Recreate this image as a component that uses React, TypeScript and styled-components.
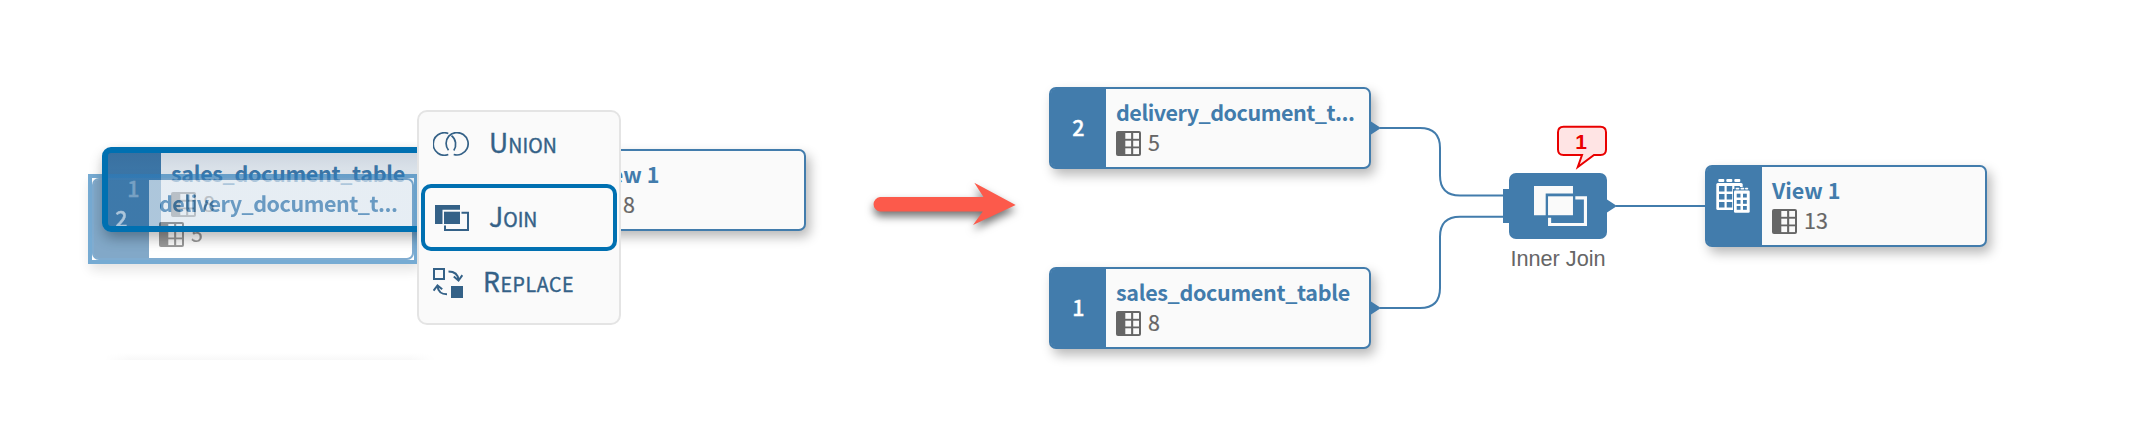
import React from 'react';
import styled, { createGlobalStyle } from 'styled-components';

const sans = '"Noto Sans CJK SC", "Noto Sans", sans-serif';
const blue = '#427cac';
const accent = '#0070b1';

const GlobalStyle = createGlobalStyle`
  * { box-sizing: border-box; }
  body { margin: 0; background: #fff; }
`;

const Canvas = styled.main`
  position: relative;
  width: 2134px;
  height: 448px;
  overflow: hidden;
  background: #fff;
  font-family: ${sans};
`;

const Layer = styled.svg`
  position: absolute;
  inset: 0;
  width: 2134px;
  height: 448px;
`;

const ArrowShape = styled.path`
  fill: #fc5a4b;
  filter: drop-shadow(0 5px 4px rgba(0, 0, 0, 0.55));
`;

const NodeCard = styled.article<{ $x: number; $y: number; $w: number }>`
  position: absolute;
  left: ${p => p.$x}px;
  top: ${p => p.$y}px;
  width: ${p => p.$w}px;
  height: 82px;
  display: flex;
  border: 2px solid ${blue};
  border-radius: 7px;
  background: #fafafa;
  box-shadow: 4px 6px 12px rgba(0, 0, 0, 0.28);
`;

const Strip = styled.div`
  display: flex;
  align-items: center;
  justify-content: center;
  flex: 0 0 55px;
  background: ${blue};
  border-radius: 4px 0 0 4px;
  color: #fff;
  font-size: 21.5px;
  line-height: 30px;
  font-weight: 500;
  -webkit-text-stroke: 0.3px currentColor;
  padding: 0 0 3px 0;
`;

const IconStrip = styled(Strip)`
  align-items: flex-start;
  padding: 12px 4px 0 0;
`;

const Body = styled.div`
  display: flex;
  flex-direction: column;
  padding: 8px 0 0 10px;
  white-space: nowrap;
`;

const Title = styled.div<{ $spacing?: number }>`
  height: 34px;
  color: ${blue};
  font-size: 21.5px;
  line-height: 30px;
  font-weight: 700;
  letter-spacing: ${p => p.$spacing ?? 0}px;
`;

const Columns = styled.div`
  display: flex;
  align-items: center;
  gap: 7px;
  height: 25px;
  color: #666;
  font-size: 21.5px;
  line-height: 24px;
`;

const Count = styled.span`
  height: 27px;
  line-height: 24px;
  -webkit-text-stroke: 0.2px currentColor;
`;

const Selected = styled.div`
  position: absolute;
  left: 102px;
  top: 147px;
  width: 340px;
  height: 85px;
  border: 6px solid ${accent};
  border-radius: 9px;
  background: linear-gradient(rgba(20, 40, 80, 0.13), rgba(20, 60, 110, 0.03) 40%), rgba(30, 110, 190, 0.07);
  box-shadow: 0 7px 14px rgba(0, 0, 0, 0.2);
`;

const Ghost = styled.div`
  position: absolute;
  left: 88px;
  top: 174px;
  width: 330px;
  height: 90px;
  padding: 4px;
  background: #3080bd;
  opacity: 0.66;
  box-shadow: 2px 6px 12px rgba(0, 0, 0, 0.18);
`;

const GhostBack = styled.div`
  width: 322px;
  height: 82px;
  background: #fff;
`;

const GhostCard = styled(NodeCard)`
  position: relative;
  left: auto;
  top: auto;
  border-color: #3f82b8;
  background: #fff;
  box-shadow: none;
  ${Title} { color: #2e74ac; }
`;

const Menu = styled.nav`
  position: absolute;
  left: 417px;
  top: 110px;
  width: 204px;
  height: 215px;
  display: flex;
  flex-direction: column;
  padding: 2px;
  border: 2px solid #e4e4e4;
  border-radius: 10px;
  background: #fafafa;
`;

const MenuItem = styled.div<{ $active?: boolean; $h: number; $bottom?: number }>`
  display: flex;
  align-items: center;
  flex: 0 0 ${p => p.$h}px;
  padding-bottom: ${p => p.$bottom ?? 0}px;
  border: 4px solid ${p => (p.$active ? accent : 'transparent')};
  border-radius: 10px;
  color: #346187;
`;

const MenuIcon = styled.span<{ $left: number; $gap: number }>`
  display: flex;
  margin-left: ${p => p.$left}px;
  margin-right: ${p => p.$gap}px;
`;

const MenuLabel = styled.span<{ $spacing: number }>`
  height: 38px;
  font-size: 26.5px;
  line-height: 34px;
  letter-spacing: ${p => p.$spacing}px;
  -webkit-text-stroke: 0.4px currentColor;
  small { font-size: 19.5px; }
`;

const JoinNode = styled.div`
  position: absolute;
  left: 1509px;
  top: 173px;
  width: 98px;
  height: 66px;
  display: flex;
  align-items: center;
  justify-content: center;
  padding-left: 4px;
  border-radius: 7px;
  background: ${blue};
  color: #fafafa;
`;

const JoinCaption = styled.div`
  position: absolute;
  left: 1498px;
  top: 246px;
  width: 120px;
  text-align: center;
  color: #666;
  font: 21.7px/25px "Liberation Sans", Arial, sans-serif;
`;

const BadgeText = styled.div`
  position: absolute;
  left: 1556px;
  top: 127px;
  width: 50px;
  text-align: center;
  color: #e90000;
  font: bold 21px/29px "Liberation Sans", Arial, sans-serif;
`;

const PanelShadow = styled.div`
  position: absolute;
  left: 104px;
  top: 353px;
  width: 332px;
  height: 7px;
  background: linear-gradient(#fff, #f8f8f8);
  mask-image: linear-gradient(90deg, transparent, #000 8%, #000 92%, transparent);
`;

const TableIcon = () => (
  <svg width="25" height="25" viewBox="0 0 25 25">
    <rect width="25" height="25" rx="2" fill="#666" />
    {[2, 9.7, 17.3].map(y => (
      <g key={y} fill="#fafafa">
        <rect x="9.3" y={y} width="5.8" height="5.8" />
        <rect x="17.2" y={y} width="5.8" height="5.8" />
      </g>
    ))}
  </svg>
);

const BuildingIcon = () => (
  <svg width="34" height="34" viewBox="0 0 34 34">
    <g fill="#fff">
      <rect x="2.3" width="6" height="3" rx="1" />
      <rect x="10.3" width="6" height="3" rx="1" />
      <rect x="18.3" width="6" height="3" rx="1" />
      <rect x="0.3" y="4" width="26.4" height="27" rx="1.5" />
    </g>
    <g fill={blue}>
      {[7, 15, 23].map(y => [3, 10.7, 18.4].map(x => <rect key={`${x}-${y}`} x={x} y={y} width="5.5" height="5.5" />))}
      <path d="M19 8H34V10H34V34H17V10H19Z" />
    </g>
    <g fill="#fff">
      <rect x="19.6" y="8.8" width="3.8" height="1.7" rx=".8" />
      <rect x="24.5" y="8.8" width="3.8" height="1.7" rx=".8" />
      <rect x="29" y="8.8" width="3.2" height="1.7" rx=".8" />
      <rect x="18" y="11.5" width="15.7" height="22.2" rx="1.3" />
    </g>
    <g fill={blue}>
      {[14.7, 21, 27].map(y => [20.7, 27].map(x => <rect key={`${x}-${y}`} x={x} y={y} width="3.8" height="3.8" />))}
    </g>
  </svg>
);

const UnionIcon = () => (
  <svg width="36" height="24" viewBox="0 0 36 24" fill="none" stroke="currentColor" strokeWidth="1.7">
    <path d="M15.3 1.5A11.2 11.2 0 1 0 15.3 22.5" />
    <path d="M18.5 3.6A11.2 11.2 0 0 1 20.8 18.5" />
    <path d="M20.7 22.5A11.2 11.2 0 1 0 15.8 4.1A11.2 11.2 0 0 0 15.5 18.3" />
  </svg>
);

const JoinIcon = ({ w, h }: { w: number; h: number }) => (
  <svg width={w} height={h} viewBox="0 0 34 26" preserveAspectRatio="none" fill="currentColor">
    <path d="M0 0H25V4.8H7.5V19H0Z" />
    <path d="M9 6.7H25V19H9Z" />
    <path d="M26.5 6.7H34V26H9V20.6H11V24H32V8.7H26.5Z" />
  </svg>
);

const ReplaceIcon = () => (
  <svg width="30" height="30" viewBox="0 0 30 30" fill="none" stroke="currentColor" strokeWidth="2">
    <rect x="1" y="1" width="10" height="10" />
    <rect x="18" y="18" width="12" height="12" fill="currentColor" stroke="none" />
    <path d="M15.5 3.5C21 3.5 25 6.5 25.6 12M20.8 8.6L25.5 12.5L29.4 7.2" />
    <path d="M14 26.3C8.5 26.3 5 23 4.4 18M.6 22.7L4.5 17.4L9.2 21.3" />
  </svg>
);

interface ContentProps { title: string; count: number; index?: number; spacing?: number }
interface CardProps extends ContentProps { x: number; y: number; w: number }

const CardContent = ({ title, count, index, spacing }: ContentProps) => (
  <>
    {index ? <Strip>{index}</Strip> : <IconStrip><BuildingIcon /></IconStrip>}
    <Body>
      <Title $spacing={spacing}>{title}</Title>
      <Columns><TableIcon /><Count>{count}</Count></Columns>
    </Body>
  </>
);

const Card = ({ x, y, w, ...content }: CardProps) => (
  <NodeCard $x={x} $y={y} $w={w}><CardContent {...content} /></NodeCard>
);

export default function App() {
  return (
    <Canvas>
      <GlobalStyle />
      <PanelShadow />
      <Card x={524} y={149} w={282} title="View 1" count={8} />
      <Card x={104} y={148} w={322} title="sales_document_table" count={8} index={1} spacing={-0.33} />
      <Ghost>
        <GhostBack>
          <GhostCard $x={0} $y={0} $w={322}>
            <CardContent title="delivery_document_t..." count={5} index={2} spacing={-0.48} />
          </GhostCard>
        </GhostBack>
      </Ghost>
      <Selected />
      <Menu>
        <MenuItem $h={70} $bottom={11}><MenuIcon $left={8} $gap={20}><UnionIcon /></MenuIcon><MenuLabel $spacing={0.1}>U<small>NION</small></MenuLabel></MenuItem>
        <MenuItem $h={67} $active><MenuIcon $left={10} $gap={20}><JoinIcon w={34} h={26} /></MenuIcon><MenuLabel $spacing={0}>J<small>OIN</small></MenuLabel></MenuItem>
        <MenuItem $h={70} $bottom={6}><MenuIcon $left={8} $gap={20}><ReplaceIcon /></MenuIcon><MenuLabel $spacing={0.6}>R<small>EPLACE</small></MenuLabel></MenuItem>
      </Menu>
      <Layer>
        <ArrowShape d="M880 197H983.5L974.3 182.7L1015.7 205L973 225L982.8 211.5H880A7.3 7.3 0 0 1 880 197Z" />
      </Layer>
      <Card x={1049} y={87} w={322} title="delivery_document_t..." count={5} index={2} spacing={-0.48} />
      <Card x={1049} y={267} w={322} title="sales_document_table" count={8} index={1} spacing={-0.33} />
      <Card x={1705} y={165} w={282} title="View 1" count={13} />
      <Layer fill="none" stroke={blue} strokeWidth="2">
        <path d="M1380 128H1420Q1440 128 1440 148V175.5Q1440 195.5 1460 195.5H1504M1380 308H1420Q1440 308 1440 288V236.8Q1440 216.8 1460 216.8H1504M1616 206H1706" />
        <path d="M1371 121.5L1381 128L1371 134.5ZM1371 301.5L1381 308L1371 314.5ZM1607 199.5L1617 206L1607 212.5ZM1503 189H1510V223H1503Z" fill={blue} stroke="none" />
        <path d="M1563.5 126.8H1600.5Q1606 126.8 1606 132.3V149.5Q1606 155 1600.5 155H1594L1577.8 167L1582 155H1563.5Q1558 155 1558 149.5V132.3Q1558 126.8 1563.5 126.8Z" fill="#ffe4e4" stroke="#e90000" />
      </Layer>
      <BadgeText>1</BadgeText>
      <JoinNode><JoinIcon w={53} h={40} /></JoinNode>
      <JoinCaption>Inner Join</JoinCaption>
    </Canvas>
  );
}
